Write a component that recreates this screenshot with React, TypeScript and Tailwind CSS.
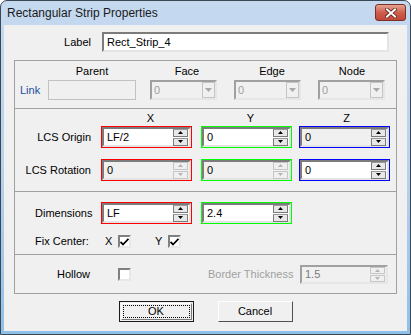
import React from "react"

const font = { fontFamily: '"Liberation Sans", Arial, sans-serif' }

function Spin({ disabled }: { disabled?: boolean }) {
  const tri = disabled ? "#b4b4b4" : "#000000"
  const btn = disabled
    ? "w-[15px] h-[8px] border border-[#c6c6c6] bg-[#f0f0f0] flex items-center justify-center"
    : "w-[15px] h-[8px] border border-[#7a7a7a] border-t-[#9a9a9a] bg-[#e8e8e8] flex items-center justify-center"
  return (
    <div className="flex flex-col gap-px mr-px">
      <div className={btn}>
        <svg width="5" height="3" viewBox="0 0 5 3"><path d="M2.5 0 L5 3 L0 3 Z" fill={tri} /></svg>
      </div>
      <div className={btn}>
        <svg width="5" height="3" viewBox="0 0 5 3"><path d="M0 0 L5 0 L2.5 3 Z" fill={tri} /></svg>
      </div>
    </div>
  )
}

function SpinField({
  value,
  color,
  grayBg,
  spinOff,
}: {
  value: string
  color: string
  grayBg?: boolean
  spinOff?: boolean
}) {
  return (
    <div className={`w-[91px] h-[22px] border ${color} flex`}>
      <div
        className={`flex-1 flex items-center border-2 border-t-[#7c7c7c] border-l-[#7c7c7c] border-b-[#e4e4e4] border-r-[#e4e4e4] ${
          grayBg ? "bg-[#f0f0f0]" : "bg-white"
        }`}
      >
        <span className="flex-1 pl-[3px] text-[11px] text-black">{value}</span>
        <Spin disabled={spinOff} />
      </div>
    </div>
  )
}

function Combo({ w }: { w: string }) {
  return (
    <div
      className={`${w} h-[20px] flex items-center bg-[#f0f0f0] border-2 border-t-[#a0a0a0] border-l-[#a0a0a0] border-b-[#e6e6e6] border-r-[#e6e6e6]`}
    >
      <span className="flex-1 pl-[2px] text-[11px] text-[#a0a0a0]">0</span>
      <div className="w-[13px] h-[16px] border border-[#c4c4c4] bg-[#f0f0f0] flex items-center justify-center">
        <svg width="7" height="4" viewBox="0 0 7 4"><path d="M0 0 L7 0 L3.5 4 Z" fill="#a8a8a8" /></svg>
      </div>
    </div>
  )
}

function Check({ checked }: { checked?: boolean }) {
  return (
    <div className="w-[13px] h-[13px] bg-white border-2 border-t-[#808080] border-l-[#808080] border-b-[#e8e8e8] border-r-[#e8e8e8] flex items-center justify-center">
      {checked && (
        <svg width="9" height="8" viewBox="0 0 9 8">
          <path d="M0.5 4 L3 6.5 L8.5 0.8" stroke="#000" strokeWidth="1.8" fill="none" />
        </svg>
      )}
    </div>
  )
}

export default function App() {
  return (
    <div
      className="w-[411px] h-[335px] flex flex-col border border-[#3a4856] rounded-t-[7px] overflow-hidden bg-gradient-to-b from-[#c5d9ef] via-[#b9d1ec] to-[#8fc0e8] text-[11px] text-black"
      style={font}
    >
      {/* Title bar */}
      <div className="h-[24px] flex items-center justify-between pl-[6px] pr-[4px]">
        <span className="text-[12px] text-[#1a1a1a] mt-[-1px]">Rectangular Strip Properties</span>
        <div className="w-[31px] h-[17px] self-start mt-[3px] rounded-[3px] border border-[#7c2f26] bg-gradient-to-b from-[#e5a293] via-[#cf5f4c] to-[#c0473a] flex items-center justify-center">
          <svg width="12" height="10" viewBox="0 0 12 10">
            <path d="M2 1.5 L10 8.5 M10 1.5 L2 8.5" stroke="#5a2018" strokeWidth="3.6" strokeLinecap="square" />
            <path d="M2 1.5 L10 8.5 M10 1.5 L2 8.5" stroke="#ffffff" strokeWidth="2" strokeLinecap="square" />
          </svg>
        </div>
      </div>

      {/* Client area */}
      <div className="flex-1 mx-[3px] mb-[3px] bg-[#f0f0f0] flex flex-col">
        {/* Label row */}
        <div className="flex items-center mt-[7px] h-[20px]">
          <span className="w-[87px] text-right">Label</span>
          <div className="ml-[11px] w-[287px] h-[20px] flex items-center bg-white border-2 border-t-[#7c7c7c] border-l-[#7c7c7c] border-b-[#e4e4e4] border-r-[#e4e4e4]">
            <span className="pl-[3px] text-[11px]">Rect_Strip_4</span>
          </div>
        </div>

        {/* Group box */}
        <div className="mt-[8px] ml-[10px] w-[383px] border border-[#a0a0a0] flex flex-col">
          {/* Link section */}
          <div className="h-[47px] pt-[4px] flex flex-col">
            <div className="flex h-[13px] leading-[13px]">
              <span className="ml-[33px] w-[88px] text-center">Parent</span>
              <span className="ml-[14px] w-[74px] text-center">Face</span>
              <span className="ml-[10px] w-[76px] text-center">Edge</span>
              <span className="ml-[8px] w-[68px] text-center">Node</span>
            </div>
            <div className="flex items-center mt-[2px] h-[20px]">
              <span className="ml-[5px] w-[28px] text-[#1d4fa0]">Link</span>
              <div className="w-[88px] h-[20px] bg-[#f0f0f0] border border-[#c2c2c2]" />
              <div className="ml-[14px]"><Combo w="w-[67px]" /></div>
              <div className="ml-[17px]"><Combo w="w-[67px]" /></div>
              <div className="ml-[17px]"><Combo w="w-[67px]" /></div>
            </div>
          </div>

          {/* LCS section */}
          <div className="h-[83px] border-t border-[#a0a0a0] pt-[3px] flex flex-col">
            <div className="flex h-[13px] leading-[13px]">
              <span className="ml-[88px] w-[91px] text-center pl-[4px]">X</span>
              <span className="ml-[9px] w-[91px] text-center pl-[4px]">Y</span>
              <span className="ml-[7px] w-[91px] text-center">Z</span>
            </div>
            <div className="flex items-center mt-[1px]">
              <span className="w-[76px] text-right">LCS Origin</span>
              <div className="ml-[10px]"><SpinField value="LF/2" color="border-[#ff0000]" /></div>
              <div className="ml-[9px]"><SpinField value="0" color="border-[#00ff00]" /></div>
              <div className="ml-[7px]"><SpinField value="0" color="border-[#0000ff]" grayBg /></div>
            </div>
            <div className="flex items-center mt-[11px]">
              <span className="w-[76px] text-right">LCS Rotation</span>
              <div className="ml-[10px]"><SpinField value="0" color="border-[#ff0000]" grayBg spinOff /></div>
              <div className="ml-[9px]"><SpinField value="0" color="border-[#00ff00]" grayBg spinOff /></div>
              <div className="ml-[7px]"><SpinField value="0" color="border-[#0000ff]" /></div>
            </div>
          </div>

          {/* Dimensions section */}
          <div className="h-[63px] border-t border-[#a0a0a0] pt-[10px] flex flex-col">
            <div className="flex items-center">
              <span className="ml-[20px] w-[66px]">Dimensions</span>
              <SpinField value="LF" color="border-[#ff0000]" />
              <div className="ml-[9px]"><SpinField value="2.4" color="border-[#00ff00]" /></div>
            </div>
            <div className="flex items-center mt-[11px] h-[13px]">
              <span className="ml-[20px] w-[70px]">Fix Center:</span>
              <span className="w-[13px]">X</span>
              <Check checked />
              <span className="ml-[24px] w-[13px]">Y</span>
              <Check checked />
            </div>
          </div>

          {/* Hollow section */}
          <div className="h-[39px] border-t border-[#a0a0a0] pt-[10px] flex flex-col">
            <div className="flex items-center h-[19px]">
              <span className="ml-[42px] w-[61px]">Hollow</span>
              <Check />
              <span className="ml-[77px] w-[92px] text-[#a0a0a0]">Border Thickness</span>
              <div className="w-[88px] h-[19px] flex items-center bg-[#f0f0f0] border-2 border-t-[#a0a0a0] border-l-[#a0a0a0] border-b-[#e6e6e6] border-r-[#e6e6e6]">
                <span className="flex-1 pl-[3px] text-[#7a7a7a]">1.5</span>
                <div className="flex flex-col gap-px mr-px">
                  <div className="w-[15px] h-[7px] border border-[#c6c6c6] flex items-center justify-center">
                    <svg width="5" height="3" viewBox="0 0 5 3"><path d="M2.5 0 L5 3 L0 3 Z" fill="#b4b4b4" /></svg>
                  </div>
                  <div className="w-[15px] h-[7px] border border-[#c6c6c6] flex items-center justify-center">
                    <svg width="5" height="3" viewBox="0 0 5 3"><path d="M0 0 L5 0 L2.5 3 Z" fill="#b4b4b4" /></svg>
                  </div>
                </div>
              </div>
            </div>
          </div>
        </div>

        {/* Buttons */}
        <div className="flex justify-center gap-[24px] mt-[7px]">
          <button className="w-[75px] h-[21px] border border-[#1a1a1a] bg-[#f0f0f0] p-[1px]">
            <div className="w-full h-full border border-t-white border-l-white border-b-[#7a7a7a] border-r-[#7a7a7a] p-[1px]">
              <div className="w-full h-full border border-dotted border-black flex items-center justify-center text-[11px]">
                OK
              </div>
            </div>
          </button>
          <button className="w-[75px] h-[21px] border border-t-white border-l-white border-b-[#505050] border-r-[#505050] bg-[#f0f0f0] flex items-center justify-center text-[11px]">
            Cancel
          </button>
        </div>
      </div>
    </div>
  )
}
